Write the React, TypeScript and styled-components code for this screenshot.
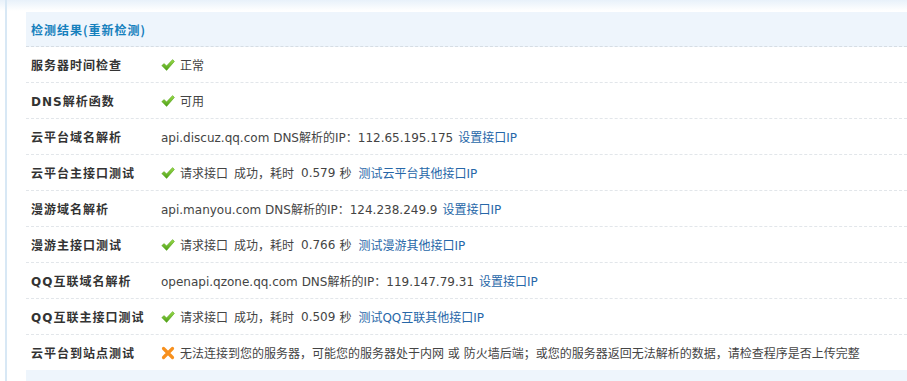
import React from "react";
import styled, { createGlobalStyle } from "styled-components";

const Global = createGlobalStyle`
  html, body { margin: 0; padding: 0; background: #fff; }
  body { font-family: "DejaVu Sans", "Noto Sans CJK SC", sans-serif; font-size: 12px; color: #444; }
`;

const Page = styled.div`
  height: 381px;
  overflow: hidden;
  background: linear-gradient(to bottom, #e8f1fa 0px, #ffffff 11px);
`;

const Frame = styled.div`
  margin-left: 5px;
  height: 100%;
  border-left: 2px solid #d8e8f5;
  padding: 12px 0 0 19px;
  box-sizing: border-box;
`;

const Table = styled.div`
  display: flex;
  flex-direction: column;
`;

const Header = styled.div`
  height: 34px;
  display: flex;
  align-items: center;
  padding-left: 5px;
  background: #eef5fc;
  border-bottom: 1px dashed #d6dde4;
  font-family: "Noto Sans CJK SC", sans-serif;
  font-weight: bold;
  letter-spacing: 1px;
  color: #1580bd;
`;

const HeaderLink = styled.span`
  color: #1580bd;
  cursor: pointer;
`;

const Row = styled.div<{ $last?: boolean }>`
  height: 35px;
  display: flex;
  align-items: center;
  border-bottom: ${(p) => (p.$last ? "none" : "1px dashed #e2e6ea")};
`;

const Label = styled.div`
  width: 135px;
  padding-left: 5px;
  box-sizing: border-box;
  flex-shrink: 0;
  font-family: "DejaVu Sans", "Noto Sans CJK SC", sans-serif;
  font-weight: bold;
  letter-spacing: 1px;
  color: #333;
`;

const Value = styled.div`
  display: flex;
  align-items: center;
  white-space: nowrap;
  color: #444;
`;

const IconBox = styled.span`
  display: inline-flex;
  width: 14px;
  height: 14px;
  margin-right: 5px;
`;

const Link = styled.a<{ $gap: number }>`
  color: #2767a8;
  text-decoration: none;
  margin-left: ${(p) => p.$gap}px;
  cursor: pointer;
`;

const Gap = styled.span<{ $w: number }>`
  display: inline-block;
  width: ${(p) => p.$w}px;
`;

const Footer = styled.div`
  height: 20px;
  background: #eef5fc;
`;

const Check = () => (
  <IconBox>
    <svg width="14" height="14" viewBox="0 0 14 14">
      <defs>
        <linearGradient id="cg" x1="0" y1="0" x2="0" y2="1">
          <stop offset="0" stopColor="#9bdc4a" />
          <stop offset="1" stopColor="#4c9e17" />
        </linearGradient>
      </defs>
      <path
        d="M0.8 7.6 L3.2 5.6 L5.5 8 L11.6 1.6 L13.4 3.4 L5.6 12.4 Z"
        fill="url(#cg)"
        stroke="#5aa820"
        strokeWidth="0.6"
        strokeLinejoin="round"
      />
    </svg>
  </IconBox>
);

const Cross = () => (
  <IconBox>
    <svg width="14" height="14" viewBox="0 0 14 14">
      <path
        d="M2.5 2.5 L11.5 11.5 M11.5 2.5 L2.5 11.5"
        stroke="#f7901e"
        strokeWidth="3.2"
        strokeLinecap="round"
      />
    </svg>
  </IconBox>
);

const Timing = ({ secs, link }: { secs: string; link: string }) => (
  <>
    <Check />
    请求接口
    <Gap $w={6} />
    成功，耗时
    <Gap $w={7} />
    {secs}
    <Gap $w={4} />秒
    <Link $gap={7}>{link}</Link>
  </>
);

const Dns = ({ host, ip }: { host: string; ip: string }) => (
  <>
    {host} DNS解析的IP：{ip}
    <Link $gap={5}>设置接口IP</Link>
  </>
);

type Item = { label: string; content: React.ReactNode };

const items: Item[] = [
  { label: "服务器时间检查", content: <><Check />正常</> },
  { label: "DNS解析函数", content: <><Check />可用</> },
  { label: "云平台域名解析", content: <Dns host="api.discuz.qq.com" ip="112.65.195.175" /> },
  { label: "云平台主接口测试", content: <Timing secs="0.579" link="测试云平台其他接口IP" /> },
  { label: "漫游域名解析", content: <Dns host="api.manyou.com" ip="124.238.249.9" /> },
  { label: "漫游主接口测试", content: <Timing secs="0.766" link="测试漫游其他接口IP" /> },
  { label: "QQ互联域名解析", content: <Dns host="openapi.qzone.qq.com" ip="119.147.79.31" /> },
  { label: "QQ互联主接口测试", content: <Timing secs="0.509" link="测试QQ互联其他接口IP" /> },
  {
    label: "云平台到站点测试",
    content: (
      <>
        <Cross />
        无法连接到您的服务器，可能您的服务器处于内网 或 防火墙后端；或您的服务器返回无法解析的数据，请检查程序是否上传完整
      </>
    ),
  },
];

export default function App() {
  return (
    <>
      <Global />
      <Page>
        <Frame>
          <Table>
            <Header>
              检测结果(<HeaderLink>重新检测</HeaderLink>)
            </Header>
            {items.map((it, i) => (
              <Row key={it.label} $last={i === items.length - 1}>
                <Label>{it.label}</Label>
                <Value>{it.content}</Value>
              </Row>
            ))}
            <Footer />
          </Table>
        </Frame>
      </Page>
    </>
  );
}
